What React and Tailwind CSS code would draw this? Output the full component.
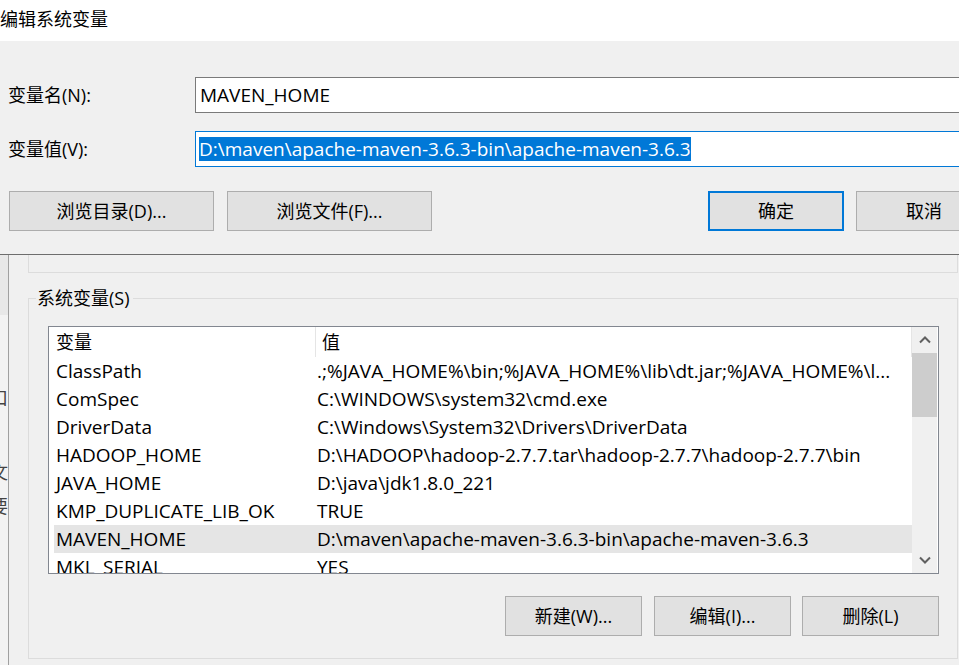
import React from "react";

const rows = [
  ["ClassPath", ".;%JAVA_HOME%\\bin;%JAVA_HOME%\\lib\\dt.jar;%JAVA_HOME%\\l..."],
  ["ComSpec", "C:\\WINDOWS\\system32\\cmd.exe"],
  ["DriverData", "C:\\Windows\\System32\\Drivers\\DriverData"],
  ["HADOOP_HOME", "D:\\HADOOP\\hadoop-2.7.7.tar\\hadoop-2.7.7\\hadoop-2.7.7\\bin"],
  ["JAVA_HOME", "D:\\java\\jdk1.8.0_221"],
  ["KMP_DUPLICATE_LIB_OK", "TRUE"],
  ["MAVEN_HOME", "D:\\maven\\apache-maven-3.6.3-bin\\apache-maven-3.6.3"],
  ["MKL_SERIAL", "YES"],
];

function Btn({ children, className = "", primary = false }) {
  return (
    <div
      className={`flex shrink-0 items-center justify-center h-[40px] bg-[#e1e1e1] leading-[24px] ${
        primary ? "border-2 border-[#0078d7]" : "border border-[#adadad]"
      } ${className}`}
    >
      {children}
    </div>
  );
}

function Chevron({ down = false }) {
  return (
    <svg width="12" height="8" viewBox="0 0 12 8" className="block">
      <path
        d={down ? "M1 1.5 L6 6.5 L11 1.5" : "M1 6.5 L6 1.5 L11 6.5"}
        fill="none"
        stroke="#606060"
        strokeWidth="2"
      />
    </svg>
  );
}

export default function App() {
  return (
    <div className="w-[959px] h-[665px] overflow-hidden flex flex-col bg-[#f0f0f0] text-[18px] text-black font-['Open_Sans','Noto_Sans_CJK_SC',sans-serif]">
      {/* 编辑系统变量 dialog */}
      <div className="shrink-0 border-b border-[#6d6d6d]">
        <div className="h-[41px] bg-white pt-[7px] leading-[24px] whitespace-nowrap">编辑系统变量</div>
        <div className="h-[213px] flex flex-col">
          <div className="flex items-center mt-[36px] h-[36px]">
            <div className="w-[195px] shrink-0 pl-[8px] leading-[24px]">变量名(N):</div>
            <div className="w-[800px] shrink-0 h-full flex items-center bg-white border border-[#7a7a7a] pl-[4px] text-[19px] leading-[24px]">
              MAVEN_HOME
            </div>
          </div>
          <div className="flex items-center mt-[18px] h-[36px]">
            <div className="w-[195px] shrink-0 pl-[8px] leading-[24px]">变量值(V):</div>
            <div className="w-[800px] shrink-0 h-full flex items-center bg-white border border-[#0078d7] pl-[3px] text-[19px]">
              <span className="bg-[#0078d7] text-white leading-[24px] whitespace-nowrap">
                D:\maven\apache-maven-3.6.3-bin\apache-maven-3.6.3
              </span>
            </div>
          </div>
          <div className="flex mt-[24px]">
            <Btn className="ml-[9px] w-[205px]">浏览目录(D)...</Btn>
            <Btn className="ml-[13px] w-[205px]">浏览文件(F)...</Btn>
            <Btn primary className="ml-[276px] w-[136px]">确定</Btn>
            <Btn className="ml-[12px] w-[136px]">取消</Btn>
          </div>
        </div>
      </div>

      {/* 环境变量 dialog behind */}
      <div className="flex-1 flex min-h-0">
        <div className="w-[9px] shrink-0 border-r border-[#a0a0a0] bg-[#f3f3f3] flex flex-col text-[#444]">
          <div className="h-[60px] bg-[#e8e8e8]" />
          <div className="mt-[71px] h-[24px] flex justify-end overflow-hidden leading-[24px] whitespace-nowrap">口</div>
          <div className="mt-[50px] h-[24px] flex justify-end overflow-hidden leading-[24px] whitespace-nowrap">文</div>
          <div className="mt-[10px] h-[24px] flex justify-end overflow-hidden leading-[24px] whitespace-nowrap">要</div>
        </div>

        <div className="flex-1 flex flex-col pl-[19px] pr-px">
          <div className="h-[18px] shrink-0 border-x border-b border-[#dcdcdc]" />

          {/* 系统变量 group */}
          <div className="mt-[14px] h-[22px] flex shrink-0">
            <div className="w-[8px] h-[11px] self-end border-l border-t border-[#dcdcdc]" />
            <div className="pl-[1px] pr-[3px] leading-[22px] whitespace-nowrap">系统变量(S)</div>
            <div className="flex-1 h-[11px] self-end border-r border-t border-[#dcdcdc]" />
          </div>
          <div className="shrink-0 border-x border-b border-[#dcdcdc] pt-[17px] pl-[19px] pb-[22px]">
            <div className="w-[891px] h-[248px] flex border border-[#828790] bg-white overflow-hidden">
              <div className="w-[863px] flex flex-col">
                <div className="h-[30px] shrink-0 flex">
                  <div className="w-[266px] pl-[7px] flex items-center leading-[24px]">变量</div>
                  <div className="w-px bg-[#e5e5e5]" />
                  <div className="flex-1 pl-[6px] flex items-center leading-[24px]">值</div>
                  <div className="w-px bg-[#e5e5e5]" />
                </div>
                <div className="pl-[5px] flex flex-col text-[19px]">
                  {rows.map(([name, value]) => (
                    <div
                      key={name}
                      className={`h-[28px] shrink-0 flex items-center leading-[24px] whitespace-nowrap ${
                        name === "MAVEN_HOME" ? "bg-[#e5e5e5]" : ""
                      }`}
                    >
                      <div className="w-[261px] shrink-0 pl-[2px] overflow-hidden">{name}</div>
                      <div className="flex-1 pl-[2px] overflow-hidden">{value}</div>
                    </div>
                  ))}
                </div>
              </div>
              <div className="w-[25px] shrink-0 bg-[#f0f0f0] flex flex-col">
                <div className="h-[26px] flex items-center justify-center">
                  <Chevron />
                </div>
                <div className="h-[64px] bg-[#cdcdcd]" />
                <div className="flex-1" />
                <div className="h-[26px] flex items-center justify-center">
                  <Chevron down />
                </div>
              </div>
            </div>
            <div className="flex mt-[22px] pl-[457px]">
              <Btn className="w-[137px]">新建(W)...</Btn>
              <Btn className="ml-[12px] w-[137px]">编辑(I)...</Btn>
              <Btn className="ml-[11px] w-[137px]">删除(L)</Btn>
            </div>
          </div>
        </div>
      </div>
    </div>
  );
}
